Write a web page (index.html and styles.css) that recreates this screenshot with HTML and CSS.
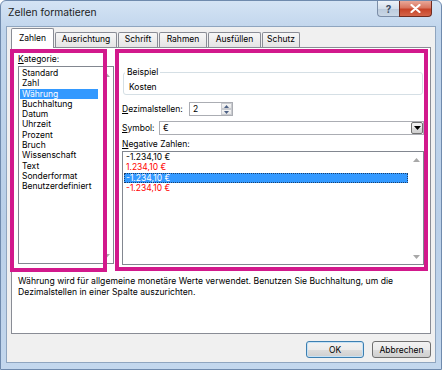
FILE: index.html
```html
<!DOCTYPE html>
<html lang="de">
<head>
<meta charset="utf-8">
<title>Zellen formatieren</title>
<link rel="stylesheet" href="styles.css">
</head>
<body>
<div class="window">
  <div class="titlebar">
    <span class="title">Zellen formatieren</span>
    <div class="caption-btns">
      <div class="cbtn help">?</div>
      <div class="cbtn close">
        <svg width="11" height="9" viewBox="0 0 11 9"><path d="M1.5 1 L9.5 8 M9.5 1 L1.5 8" stroke="#fff" stroke-width="2.2" stroke-linecap="round"/></svg>
      </div>
    </div>
  </div>
  <div class="client">
    <div class="tabs">
      <div class="tab active t1">Zahlen</div>
      <div class="tab t2">Ausrichtung</div>
      <div class="tab t3">Schrift</div>
      <div class="tab t4">Rahmen</div>
      <div class="tab t5">Ausfüllen</div>
      <div class="tab t6">Schutz</div>
    </div>
    <div class="panel">
      <div class="cols">
        <div class="col-left">
          <div class="label"><u>K</u>ategorie:</div>
          <div class="listbox cat">
            <div class="items">
              <div class="item">Standard</div>
              <div class="item">Zahl</div>
              <div class="item selected">Währung</div>
              <div class="item">Buchhaltung</div>
              <div class="item">Datum</div>
              <div class="item">Uhrzeit</div>
              <div class="item">Prozent</div>
              <div class="item">Bruch</div>
              <div class="item">Wissenschaft</div>
              <div class="item">Text</div>
              <div class="item">Sonderformat</div>
              <div class="item">Benutzerdefiniert</div>
            </div>
            <div class="vscroll">
              <svg width="7" height="4" viewBox="0 0 7 4"><path d="M0 4 L3.5 0 L7 4 Z" fill="#a8a8a8"/></svg>
              <svg width="7" height="4" viewBox="0 0 7 4"><path d="M0 0 L3.5 4 L7 0 Z" fill="#a8a8a8"/></svg>
            </div>
          </div>
        </div>
        <div class="col-right">
          <fieldset class="group">
            <legend>Beispiel</legend>
            <div class="sample">Kosten</div>
          </fieldset>
          <div class="row dez">
            <span class="lbl lbl-dez"><u>D</u>ezimalstellen:</span>
            <div class="spin">
              <span class="spin-val">2</span>
              <div class="spin-btns">
                <div class="spin-btn"><svg width="5" height="3" viewBox="0 0 5 3"><path d="M0 3 L2.5 0 L5 3 Z" fill="#4d6185"/></svg></div>
                <div class="spin-btn"><svg width="5" height="3" viewBox="0 0 5 3"><path d="M0 0 L2.5 3 L5 0 Z" fill="#4d6185"/></svg></div>
              </div>
            </div>
          </div>
          <div class="row sym">
            <span class="lbl lbl-sym"><u>S</u>ymbol:</span>
            <div class="combo">
              <span class="combo-val">€</span>
              <div class="combo-btn"><svg width="7" height="4" viewBox="0 0 7 4"><path d="M0 0 L3.5 4 L7 0 Z" fill="#000"/></svg></div>
            </div>
          </div>
          <div class="label neg-label"><u>N</u>egative Zahlen:</div>
          <div class="listbox neg">
            <div class="items">
              <div class="item">-1.234,10 €</div>
              <div class="item red">1.234,10 €</div>
              <div class="item selected focus">-1.234,10 €</div>
              <div class="item red">-1.234,10 €</div>
            </div>
            <div class="vscroll">
              <svg width="7" height="4" viewBox="0 0 7 4"><path d="M0 4 L3.5 0 L7 4 Z" fill="#a8a8a8"/></svg>
              <svg width="7" height="4" viewBox="0 0 7 4"><path d="M0 0 L3.5 4 L7 0 Z" fill="#a8a8a8"/></svg>
            </div>
          </div>
        </div>
      </div>
      <p class="desc">Währung wird für allgemeine monetäre Werte verwendet. Benutzen Sie Buchhaltung, um die Dezimalstellen in einer Spalte auszurichten.</p>
      <div class="mark mark-left"></div>
      <div class="mark mark-right"></div>
    </div>
    <div class="buttons">
      <button class="btn default">OK</button>
      <button class="btn wide">Abbrechen</button>
    </div>
  </div>
</div>
</body>
</html>
```

FILE: styles.css
```css
html, body {
  margin: 0;
  padding: 0;
}
body {
  width: 442px;
  height: 370px;
  overflow: hidden;
  font-family: Inter, "Noto Sans", sans-serif;
  font-size: 8.5px;
  color: #000;
  background: #fff;
}
.window {
  width: 442px;
  height: 370px;
  box-sizing: border-box;
  border: 1px solid #6f8aad;
  border-radius: 6px 6px 0 0;
  background: linear-gradient(#d4e3f4 0%, #c0d5ec 8%, #b9cfe8 60%, #c3d7ed 100%);
  padding: 0 5px 6px 5px;
  display: flex;
  flex-direction: column;
}
.titlebar {
  height: 25px;
  display: flex;
  align-items: flex-start;
  flex: none;
}
.title {
  padding: 6px 0 0 2px;
  line-height: 11px;
  font-size: 10.3px;
  color: #1e1e1e;
}
.caption-btns {
  margin-left: auto;
  margin-right: 4px;
  display: flex;
}
.cbtn {
  height: 16px;
  box-sizing: border-box;
  display: flex;
  align-items: center;
  justify-content: center;
}
.help {
  width: 22px;
  border: 1px solid #7c8ea8;
  border-top: none;
  border-right: none;
  border-radius: 0 0 0 4px;
  background: linear-gradient(#eef3f9 0%, #d3deeb 50%, #bccbdd 55%, #cad7e6 100%);
  font-weight: bold;
  color: #3b4b63;
  font-size: 10px;
  line-height: 14px;
}
.close {
  width: 33px;
  border: 1px solid #6f2b20;
  border-top: none;
  border-radius: 0 0 4px 0;
  background: linear-gradient(#e9a898 0%, #d9755f 45%, #c74328 55%, #d4654a 100%);
}
.client {
  height: 337px;
  box-sizing: border-box;
  background: #f0f0f0;
  border: 1px solid #8fa5bf;
  padding: 1px 4px 0 4px;
  display: flex;
  flex-direction: column;
  flex: none;
}
.tabs {
  display: flex;
  align-items: flex-start;
  gap: 1px;
  height: 20px;
  position: relative;
  z-index: 1;
}
.tab {
  box-sizing: border-box;
  height: 15px;
  margin-top: 4px;
  border: 1px solid #898c95;
  border-bottom: none;
  border-radius: 2px 2px 0 0;
  background: linear-gradient(#f7f7f7, #e4e4e4);
  text-align: center;
  line-height: 13px;
}
.tab.active {
  height: 20px;
  margin-top: 0;
  background: #fff;
  line-height: 18px;
}
.t1 { width: 43px; }
.t2 { width: 62px; }
.t3 { width: 40px; }
.t4 { width: 48px; }
.t5 { width: 53px; }
.t6 { width: 38px; }
.panel {
  position: relative;
  width: 420px;
  height: 287px;
  box-sizing: border-box;
  margin-top: -1px;
  background: #fff;
  border: 1px solid #898c95;
  flex: none;
}
.cols {
  display: flex;
  gap: 8px;
  padding-left: 6px;
}
.col-left {
  width: 96px;
  display: flex;
  flex-direction: column;
}
.label {
  line-height: 10px;
}
.col-left .label {
  margin-top: 6px;
}
.listbox {
  box-sizing: border-box;
  border: 1px solid #828790;
  background: #fff;
  display: flex;
  margin-top: 2px;
}
.listbox .items {
  flex: 1;
  padding: 1px 1px 0 1px;
}
.listbox.neg .items {
  padding-top: 0;
}
.item {
  line-height: 10.3px;
  padding-left: 2px;
  white-space: nowrap;
}
.item.selected {
  background: #3399ff;
  color: #fff;
}
.item.focus {
  outline: 1px dotted #1c3f6a;
  outline-offset: -1px;
}
.item.red {
  color: #ff0000;
}
.vscroll {
  width: 14px;
  display: flex;
  flex-direction: column;
  justify-content: space-between;
  align-items: center;
  padding: 6px 0 5px 0;
}
.listbox.cat {
  height: 198px;
}
.col-right {
  width: 302px;
  display: flex;
  flex-direction: column;
}
.group {
  margin: 19px 1px 0 1px;
  padding: 0 0 2px 3px;
  border: 1px solid #d5dfe5;
  border-radius: 3px;
  min-width: 0;
}
.group legend {
  padding: 0 2px;
  margin-left: -2px;
  line-height: 10px;
}
.sample {
  margin-top: 5px;
  padding-left: 2px;
  line-height: 10px;
}
.row {
  display: flex;
  align-items: center;
  height: 14px;
}
.dez {
  margin-top: 7px;
}
.sym {
  margin-top: 5px;
}
.lbl {
  line-height: 10px;
  flex: none;
}
.lbl-dez { width: 67px; }
.lbl-sym { width: 37px; }
.spin {
  width: 44px;
  height: 14px;
  box-sizing: border-box;
  border: 1px solid #abadb3;
  background: #fff;
  display: flex;
}
.spin-val {
  flex: 1;
  padding-left: 3px;
  line-height: 12px;
}
.spin-btns {
  width: 11px;
  display: flex;
  flex-direction: column;
}
.spin-btn {
  flex: 1;
  box-sizing: border-box;
  border: 1px solid #c9cbd0;
  background: linear-gradient(#f6f6f6, #e6e6e6);
  display: flex;
  align-items: center;
  justify-content: center;
}
.combo {
  width: 266px;
  height: 14px;
  box-sizing: border-box;
  border: 1px solid #abadb3;
  background: #fff;
  display: flex;
  align-items: center;
}
.combo-val {
  flex: 1;
  padding-left: 3px;
  line-height: 12px;
}
.combo-btn {
  width: 12px;
  height: 12px;
  box-sizing: border-box;
  border: 1px solid #707070;
  border-radius: 2px;
  background: linear-gradient(#f2f2f2 0%, #ebebeb 50%, #dddddd 51%, #cfcfcf 100%);
  display: flex;
  align-items: center;
  justify-content: center;
}
.neg-label {
  margin-top: 4px;
}
.listbox.neg {
  height: 114px;
}
.desc {
  margin: 11px 0 0 0;
  padding: 0 6px;
  line-height: 11px;
  font-size: 8.65px;
}
.mark {
  position: absolute;
  box-sizing: border-box;
  border: 4px solid #d2198c;
  pointer-events: none;
}
.mark-left {
  left: -2px;
  top: 1px;
  width: 97px;
  height: 223px;
}
.mark-right {
  left: 103px;
  top: 1px;
  width: 313px;
  height: 222px;
}
.buttons {
  display: flex;
  justify-content: flex-end;
  gap: 8px;
  margin-top: 7px;
}
.btn {
  font: inherit;
  color: #000;
  width: 58px;
  height: 17px;
  padding: 0;
  box-sizing: border-box;
  border: 1px solid #707070;
  border-radius: 3px;
  background: linear-gradient(#f2f2f2 0%, #ebebeb 50%, #dddddd 51%, #cfcfcf 100%);
}
.btn.wide {
  width: 59px;
}
.btn.default {
  border-color: #3c7fb1;
  box-shadow: inset 0 0 0 1px #c6e2f6;
}
```
